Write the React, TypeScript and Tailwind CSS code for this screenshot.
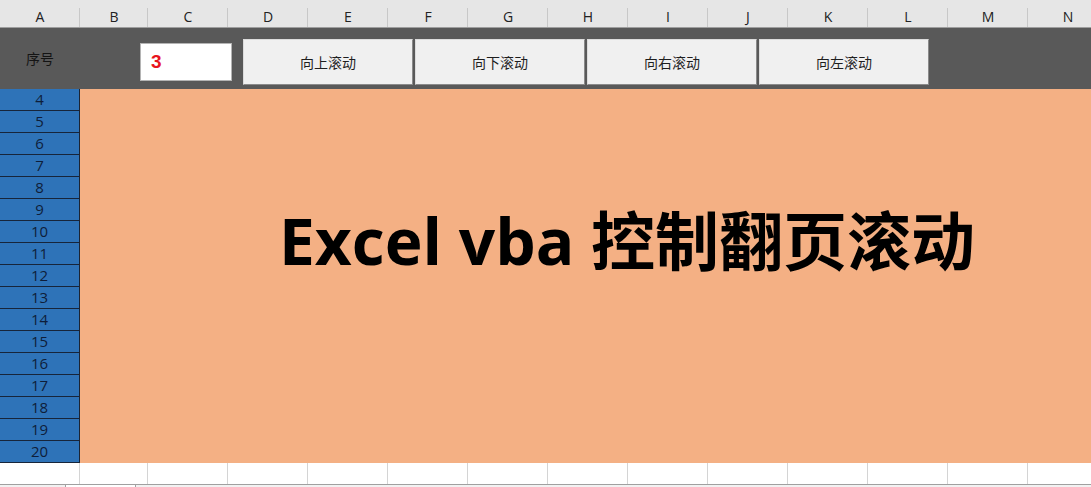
import React from "react";

const cols = [
  { l: "A", w: 80 },
  { l: "B", w: 68 },
  { l: "C", w: 80 },
  { l: "D", w: 80 },
  { l: "E", w: 80 },
  { l: "F", w: 80 },
  { l: "G", w: 80 },
  { l: "H", w: 80 },
  { l: "I", w: 80 },
  { l: "J", w: 80 },
  { l: "K", w: 80 },
  { l: "L", w: 80 },
  { l: "M", w: 80 },
  { l: "N", w: 80 },
];

const rows = [4, 5, 6, 7, 8, 9, 10, 11, 12, 13, 14, 15, 16, 17, 18, 19, 20];
const buttons = ["向上滚动", "向下滚动", "向右滚动", "向左滚动"];

const font = { fontFamily: '"Open Sans", "Noto Sans CJK SC", sans-serif' };

export default function App() {
  return (
    <div className="w-[1091px] h-[487px] overflow-hidden bg-white" style={font}>
      {/* column header */}
      <div className="flex h-[28px] bg-[#e6e6e6] border-b border-[#9e9e9e]">
        {cols.map((c) => (
          <div
            key={c.l}
            style={{ width: c.w }}
            className="shrink-0 relative flex items-end justify-center pb-[1px] text-[14px] leading-[18px] text-[#222]"
          >
            {c.l}
            <span className="absolute right-0 top-[8px] bottom-0 w-px bg-[#c8c8c8]" />
          </div>
        ))}
      </div>

      {/* control row */}
      <div className="flex items-start h-[61px] bg-[#595959]">
        <div className="w-[80px] shrink-0 h-full flex items-center justify-center text-[14px] text-[#141414] pb-[1px]">
          序号
        </div>
        <div className="ml-[60px] mt-[15px] w-[92px] h-[38px] bg-white border border-[#b4b4b4] flex items-center pl-[10px] text-[19px] font-bold text-[#e8141c]" style={{ fontFamily: '"Liberation Sans", sans-serif' }}>
          3
        </div>
        <div className="ml-[11px] mt-[11px] flex gap-[2px]">
          {buttons.map((b) => (
            <div
              key={b}
              className="w-[170px] h-[46px] bg-[#f0f0f0] border-t border-l border-[#dcdcdc] border-r border-b border-r-[#8a8a8a] border-b-[#8a8a8a] flex items-center justify-center text-[14px] text-[#1e1e1e] pt-[1px]"
            >
              {b}
            </div>
          ))}
        </div>
      </div>

      {/* orange body */}
      <div className="flex h-[374px]">
        <div className="w-[80px] shrink-0 bg-[#2e73b8] border-r border-[#1b2433] flex flex-col">
          {rows.map((r) => (
            <div
              key={r}
              className="h-[22px] shrink-0 border-b border-[#17253a] flex items-center justify-center text-[15px] leading-none text-[#0e1e3a]"
            >
              {r}
            </div>
          ))}
        </div>
        <div className="flex-1 bg-[#f4b084] pl-[199px] pt-[116px]">
          <div
            className="text-[64px] font-bold leading-[72px] text-black whitespace-nowrap"
            style={{ fontFamily: '"Open Sans", "Noto Sans CJK SC", sans-serif' }}
          >
            Excel vba 控制翻页滚动
          </div>
        </div>
      </div>

      {/* empty white row */}
      <div className="flex h-[21px] bg-white">
        {cols.map((c) => (
          <div
            key={c.l}
            style={{ width: c.w }}
            className="shrink-0 border-r border-[#d4d4d4]"
          />
        ))}
      </div>

      {/* bottom bar */}
      <div className="flex h-[3px] bg-[#e6e6e6] border-t border-[#a0a0a0]">
        <div className="w-[66px] bg-[#f2f2f2] border-r border-[#a0a0a0]" />
        <div className="w-[69px] bg-white" />
        <div className="flex-1 bg-[#f2f2f2] border-l border-[#a0a0a0]" />
      </div>
    </div>
  );
}
